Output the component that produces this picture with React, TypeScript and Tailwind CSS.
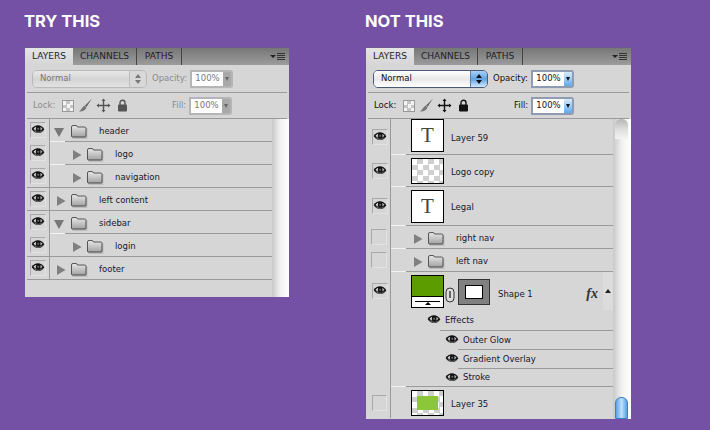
import clsx from 'clsx';

const checker =
  'bg-[repeating-conic-gradient(#cfcfcf_0%_25%,#ffffff_0%_50%)] bg-size-[11px_11px]';

function Eye() {
  return (
    <svg width="14" height="10" viewBox="0 0 12 9">
      <path d="M0.3 3.6 C3 -0.8 9 -0.8 11.7 3.8 C9 8.2 3 8.8 0.3 3.6 Z" fill="#111" />
      <path d="M1.8 4 C4 6.8 8 6.8 10.2 4.4 C8.5 7.8 3.5 7.8 1.8 4 Z" fill="#8a8a8a" />
      <path d="M2 3.3 C3 2 4 1.7 4.4 1.7 C3.8 2.8 3.8 4.2 4.6 5.2 C3.6 4.9 2.8 4.2 2 3.3 Z" fill="#e4e4e4" />
      <path d="M8 1.8 C9 2.2 9.6 2.8 10 3.4 C9.4 4 8.8 4.6 8 5 C8.4 4 8.4 2.8 8 1.8 Z" fill="#bbb" />
      <circle cx="6.2" cy="3.4" r="1" fill="#666" />
    </svg>
  );
}

function EyeBox({ on = true }: { on?: boolean }) {
  return (
    <div className="flex h-[16px] w-[16px] items-center justify-center border border-[#a9a9a9] border-r-[#e2e2e2] border-b-[#e2e2e2]">
      {on && <Eye />}
    </div>
  );
}

function Folder() {
  return (
    <svg width="17" height="14" viewBox="0 0 17 14" className="shrink-0">
      <defs>
        <linearGradient id="folderFill" x1="0" y1="0" x2="0" y2="1">
          <stop offset="0" stopColor="#e8e8e8" />
          <stop offset="1" stopColor="#a2a2a2" />
        </linearGradient>
      </defs>
      <rect x="1.5" y="3" width="15" height="11" fill="#bdbdbd" />
      <path
        d="M0.5 2 Q0.5 0.5 2 0.5 H5 Q6 0.5 6.5 2 H13.5 Q15 2 15 3.5 V11 Q15 12 14 12 H1.5 Q0.5 12 0.5 11 Z"
        fill="url(#folderFill)"
        stroke="#333"
        strokeWidth="0.8"
      />
    </svg>
  );
}

function Triangle({ open = false }: { open?: boolean }) {
  return (
    <svg width="10" height="10" viewBox="0 0 10 10" className="shrink-0">
      {open ? (
        <path d="M0 1 H10 L5 10 Z" fill="#777" />
      ) : (
        <path d="M1 0 L9.5 5 L1 10 Z" fill="#808080" />
      )}
    </svg>
  );
}

function TypeThumb({ height }: { height: string }) {
  return (
    <div
      className={clsx(
        'flex w-[33px] items-center justify-center border border-black bg-white font-["Liberation_Serif",serif] text-[21px] text-[#444]',
        height
      )}
    >
      T
    </div>
  );
}

function Tabs() {
  return (
    <div className="flex h-[18px] items-stretch border-t border-[#6a5a8c] bg-gradient-to-b from-[#777777] to-[#9c9c9c] text-[9px] text-[#1c1c2c]">
      <div className="flex w-[48px] items-center justify-center bg-gradient-to-b from-[#e4e4e4] to-[#d6d6d6]">
        LAYERS
      </div>
      <div className="flex w-[64px] items-center justify-center border-r border-[#444]">
        CHANNELS
      </div>
      <div className="flex w-[45px] items-center justify-center border-r border-[#444]">
        PATHS
      </div>
      <div className="ml-auto mr-[4px] flex items-center gap-[1px]">
        <div className="h-0 w-0 border-x-[3px] border-t-[3px] border-x-transparent border-t-[#222]" />
        <div className="flex w-[8px] flex-col gap-[1px]">
          <div className="h-px bg-[#333]" />
          <div className="h-px bg-[#333]" />
          <div className="h-px bg-[#333]" />
          <div className="h-px bg-[#333]" />
        </div>
      </div>
    </div>
  );
}

function NumberField({ active }: { active: boolean }) {
  return (
    <div
      className={clsx(
        'flex h-[18px] w-[43px] overflow-hidden rounded-r-[3px] border-2',
        active ? 'border-[#8f9bb0]' : 'border-[#b5b5b5]'
      )}
    >
      <div
        className={clsx(
          'flex w-[31px] items-center justify-center bg-white text-[8.5px]',
          active ? 'text-[#111]' : 'text-[#777]'
        )}
      >
        100%
      </div>
      <div
        className={clsx(
          'flex flex-1 items-center justify-center',
          active ? 'bg-gradient-to-b from-[#d8ecfb] to-[#5fa9ea]' : 'bg-[#a8a8a8]'
        )}
      >
        <div
          className={clsx(
            'h-0 w-0 border-x-[2.5px] border-t-[4px] border-x-transparent',
            active ? 'border-t-[#111]' : 'border-t-[#666]'
          )}
        />
      </div>
    </div>
  );
}

function BlendSelect({ active }: { active: boolean }) {
  return (
    <div
      className={clsx(
        'flex h-[18px] w-[115px] overflow-hidden rounded-[5px] border',
        active ? 'border-[#4a5878]' : 'border-[#b8b8b8]'
      )}
    >
      <div
        className={clsx(
          'flex flex-1 items-center pl-[7px] text-[8.5px]',
          active
            ? 'bg-gradient-to-b from-[#ffffff] via-[#e8e8e8] to-[#ffffff] text-[#111]'
            : 'bg-gradient-to-b from-[#e8e8e8] via-[#d4d4d4] to-[#e2e2e2] text-[#777]'
        )}
      >
        Normal
      </div>
      <div
        className={clsx(
          'flex w-[17px] flex-col items-center justify-center gap-[2px] border-l',
          active
            ? 'border-[#5a7fae] bg-gradient-to-b from-[#a8d0f4] via-[#5fa2e6] to-[#d2e9fb]'
            : 'border-[#bdbdbd] bg-[#d8d8d8]'
        )}
      >
        <div
          className={clsx(
            'h-0 w-0 border-x-[3px] border-b-[4px] border-x-transparent',
            active ? 'border-b-[#111]' : 'border-b-[#777]'
          )}
        />
        <div
          className={clsx(
            'h-0 w-0 border-x-[3px] border-t-[4px] border-x-transparent',
            active ? 'border-t-[#111]' : 'border-t-[#777]'
          )}
        />
      </div>
    </div>
  );
}

function LockIcons({ active }: { active: boolean }) {
  const ink = active ? '#111' : '#555';
  return (
    <div className="flex items-center">
      <div className="h-[12px] w-[12px] border border-[#999] bg-[repeating-conic-gradient(#c4c4c4_0%_25%,#f4f4f4_0%_50%)] bg-size-[7px_7px]" />
      <svg width="15" height="15" viewBox="0 0 15 15" className="ml-[4px]">
        <path d="M14 0.5 L7 7.5 L8.5 9 Z" fill="#666" />
        <path d="M6.5 7.5 L8.5 9.5 C7.5 12.5 4 14 1 13.5 C3 12.5 4 9 6.5 7.5 Z" fill="#777" />
      </svg>
      <svg width="15" height="15" viewBox="0 0 15 15" className="ml-[3px]">
        <path
          d="M7.5 0.5 L9.5 3 H8.2 V6.8 H12 V5.5 L14.5 7.5 L12 9.5 V8.2 H8.2 V12 H9.5 L7.5 14.5 L5.5 12 H6.8 V8.2 H3 V9.5 L0.5 7.5 L3 5.5 V6.8 H6.8 V3 H5.5 Z"
          fill={ink}
        />
      </svg>
      <svg width="11" height="13" viewBox="0 0 11 13" className="ml-[6px]">
        <path d="M3 6 V3.8 A2.5 2.5 0 0 1 8 3.8 V6" fill="none" stroke={ink} strokeWidth="1.4" />
        <rect x="1" y="5.5" width="9" height="7" rx="1" fill={ink} />
      </svg>
    </div>
  );
}

function Options({ active }: { active: boolean }) {
  const label = active ? 'text-[#111]' : 'text-[#8c8c8c]';
  return (
    <>
      <div className={clsx('flex h-[27px] items-center pl-[7px] text-[8.5px]', label)}>
        <BlendSelect active={active} />
        <div className="ml-[5px] w-[36px]">Opacity:</div>
        <div className="ml-[2px]">
          <NumberField active={active} />
        </div>
      </div>
      <div className="mx-[2px] h-px bg-[#9a9a9a]" />
      <div className={clsx('flex h-[25px] items-center pl-[8px] text-[8.5px]', label)}>
        <div className="w-[29px]">Lock:</div>
        <LockIcons active={active} />
        <div className="ml-auto w-[15px]">Fill:</div>
        <div className="ml-[2px] mr-[57px]">
          <NumberField active={active} />
        </div>
      </div>
      <div className="mx-[2px] h-px bg-[#9a9a9a]" />
    </>
  );
}

// divider under a row: white notch then grey, or grey from the eye column on
function RowLine({ full = false }: { full?: boolean }) {
  return (
    <div className="flex h-px">
      <div className={clsx('w-[22px]', full && 'bg-[#9a9a9a]')} />
      <div className="w-px bg-[#9a9a9a]" />
      {!full && <div className="w-[15px] bg-[#f2f2f2]" />}
      <div className="flex-1 bg-[#9a9a9a]" />
    </div>
  );
}

// divider between effects, starts under the eye
function EffectLine({ inset }: { inset: string }) {
  return (
    <div className="flex h-px">
      <div className="w-[23px] border-r border-[#9a9a9a]" />
      <div className={inset} />
      <div className="flex-1 bg-[#9a9a9a]" />
    </div>
  );
}

const leftRows = [
  { name: 'header', depth: 0, open: true, line: 'part' },
  { name: 'logo', depth: 1, open: false, line: 'part' },
  { name: 'navigation', depth: 1, open: false, line: 'full' },
  { name: 'left content', depth: 0, open: false, line: 'full' },
  { name: 'sidebar', depth: 0, open: true, line: 'part' },
  { name: 'login', depth: 1, open: false, line: 'full' },
  { name: 'footer', depth: 0, open: false, line: 'full' },
];

function FolderRow({ name, depth, open, on = true }: { name: string; depth: number; open: boolean; on?: boolean }) {
  return (
    <div className="flex h-[22px] items-center text-[8.5px] text-[#15152b]">
      <div className="flex h-full w-[23px] items-center justify-center border-r border-[#9a9a9a] pr-[1px]">
        <EyeBox on={on} />
      </div>
      <div
        className={clsx(
          'flex items-center pt-[3px]',
          depth === 1 ? 'pl-[22px]' : open ? 'pl-[4px]' : 'pl-[6px]'
        )}
      >
        <div className={open ? 'w-[17px]' : 'w-[15px]'}>
          <Triangle open={open} />
        </div>
        <Folder />
        <div className="ml-[11px]">{name}</div>
      </div>
    </div>
  );
}

function TryPanel() {
  return (
    <div className="flex h-[250px] flex-col overflow-hidden bg-[#d6d6d6]">
      <Tabs />
      <Options active={false} />
      <div className="flex flex-1">
        <div className="ml-[2px] flex-1">
          {leftRows.map((row) => (
            <div key={row.name}>
              <FolderRow name={row.name} depth={row.depth} open={row.open} />
              <RowLine full={row.line === 'full'} />
            </div>
          ))}
        </div>
        <div className="w-[17px] bg-gradient-to-r from-[#c8c8c8] via-[#f2f2f2] to-[#ffffff]" />
      </div>
    </div>
  );
}

function ThumbRow({ height, name, on, children }: { height: string; name: string; on: boolean; children: React.ReactNode }) {
  return (
    <div className={clsx('flex items-start text-[8.5px] text-[#15152b]', height)}>
      <div className="flex h-full w-[23px] items-center justify-center border-r border-[#9a9a9a] pl-[4px] pr-[3px]">
        <EyeBox on={on} />
      </div>
      <div className="ml-[20px] flex h-full items-start">
        {children}
        <div className="ml-[7px] self-center pt-[3px]">{name}</div>
      </div>
    </div>
  );
}

function EffectRow({ name, height, nested = false }: { name: string; height: string; nested?: boolean }) {
  return (
    <div className={clsx('flex items-center text-[8.5px] text-[#15152b]', height)}>
      <div className="h-full w-[23px] border-r border-[#9a9a9a]" />
      <div className={clsx('flex items-center gap-[4px]', nested ? 'ml-[54px]' : 'ml-[36px]')}>
        <Eye />
        <div>{name}</div>
      </div>
    </div>
  );
}

function NotPanel() {
  return (
    <div className="flex h-[372px] flex-col overflow-hidden bg-[#d6d6d6]">
      <Tabs />
      <Options active={true} />
      <div className="flex flex-1">
        <div className="ml-[2px] flex-1">
          <ThumbRow height="h-[35px]" name="Layer 59" on={true}>
            <TypeThumb height="h-[33px]" />
          </ThumbRow>
          <RowLine />
          <ThumbRow height="h-[31px]" name="Logo copy" on={true}>
            <div className={clsx('mt-[3px] h-[26px] w-[33px] border border-black', checker)} />
          </ThumbRow>
          <RowLine />
          <ThumbRow height="h-[38px]" name="Legal" on={true}>
            <div className="mt-[3px]">
              <TypeThumb height="h-[33px]" />
            </div>
          </ThumbRow>
          <RowLine />
          <FolderRow name="right nav" depth={1} open={false} on={false} />
          <RowLine />
          <FolderRow name="left nav" depth={1} open={false} on={false} />
          <RowLine />

          <div className="flex h-[38px] items-start text-[8.5px] text-[#15152b]">
            <div className="flex h-full w-[23px] items-center justify-center border-r border-[#9a9a9a] pl-[4px] pr-[3px]">
              <EyeBox />
            </div>
            <div className="ml-[20px] mt-[3px] flex h-[33px] w-[33px] flex-col border border-black bg-white">
              <div className="h-[21px] border-b border-black bg-[#5c9c00]" />
              <div className="mx-[3px] mt-[4px] h-px bg-black" />
              <div className="mx-auto h-0 w-0 border-x-[3px] border-b-[3px] border-x-transparent border-b-black" />
            </div>
            <svg width="10" height="16" viewBox="0 0 10 16" className="ml-[1px] mt-[15px]">
              <rect x="1" y="1" width="8" height="14" rx="4" fill="#ddd" stroke="#333" strokeWidth="1" />
              <path d="M5 4 V11" stroke="#333" strokeWidth="1.4" />
            </svg>
            <div className="ml-[3px] mt-[7px] flex h-[26px] w-[32px] items-center justify-center border border-[#333] bg-[#808080]">
              <div className="h-[14px] w-[18px] border border-black bg-white" />
            </div>
            <div className="ml-[8px] mt-[16px]">Shape 1</div>
            <div className="ml-auto mt-[11px] font-['Liberation_Serif',serif] text-[14px] italic font-bold text-[#333]">
              fx
            </div>
            <div className="ml-[5px] flex h-full w-[10px] justify-center bg-[#dcdcdc] pt-[17px]">
              <div className="h-0 w-0 border-x-[3.5px] border-b-[4px] border-x-transparent border-b-[#222]" />
            </div>
          </div>

          <EffectRow name="Effects" height="h-[20px]" />
          <EffectLine inset="w-[49px]" />
          <EffectRow name="Outer Glow" height="h-[18px]" nested />
          <EffectLine inset="w-[67px]" />
          <EffectRow name="Gradient Overlay" height="h-[18px]" nested />
          <EffectLine inset="w-[67px]" />
          <EffectRow name="Stroke" height="h-[17px]" nested />
          <RowLine />
          <ThumbRow height="h-[31px]" name="Layer 35" on={false}>
            <div className={clsx('mt-[3px] flex h-[26px] w-[33px] items-center justify-center border border-black', checker)}>
              <div className="h-[14px] w-[21px] bg-[#8cc63a]" />
            </div>
          </ThumbRow>
        </div>
        <div className="flex w-[18px] flex-col justify-between bg-gradient-to-r from-[#c8c8c8] via-[#f2f2f2] to-[#ffffff] pl-[2px] pr-[3px]">
          <div className="h-[20px] rounded-t-[6px] bg-gradient-to-b from-[#b5b5b5] via-[#dddddd] to-[#f4f4f4]" />
          <div className="h-[22px] rounded-t-[6px] border border-[#3f7ec4] bg-gradient-to-r from-[#5aa0e4] via-[#bfe0fa] to-[#5aa0e4]" />
        </div>
      </div>
    </div>
  );
}

export default function App() {
  return (
    <div className="flex h-[430px] w-[710px] bg-[#7451a5] font-['DejaVu_Sans',sans-serif]">
      <div className="ml-[25px] w-[264px]">
        <h2 className="-ml-px flex h-[47px] items-center pb-[4px] font-['Inter',sans-serif] text-[16.5px] font-bold text-white">
          TRY THIS
        </h2>
        <TryPanel />
      </div>
      <div className="ml-[77px] w-[265px]">
        <h2 className="-ml-px flex h-[47px] items-center pb-[4px] font-['Inter',sans-serif] text-[16.5px] font-bold text-white">
          NOT THIS
        </h2>
        <NotPanel />
      </div>
    </div>
  );
}
